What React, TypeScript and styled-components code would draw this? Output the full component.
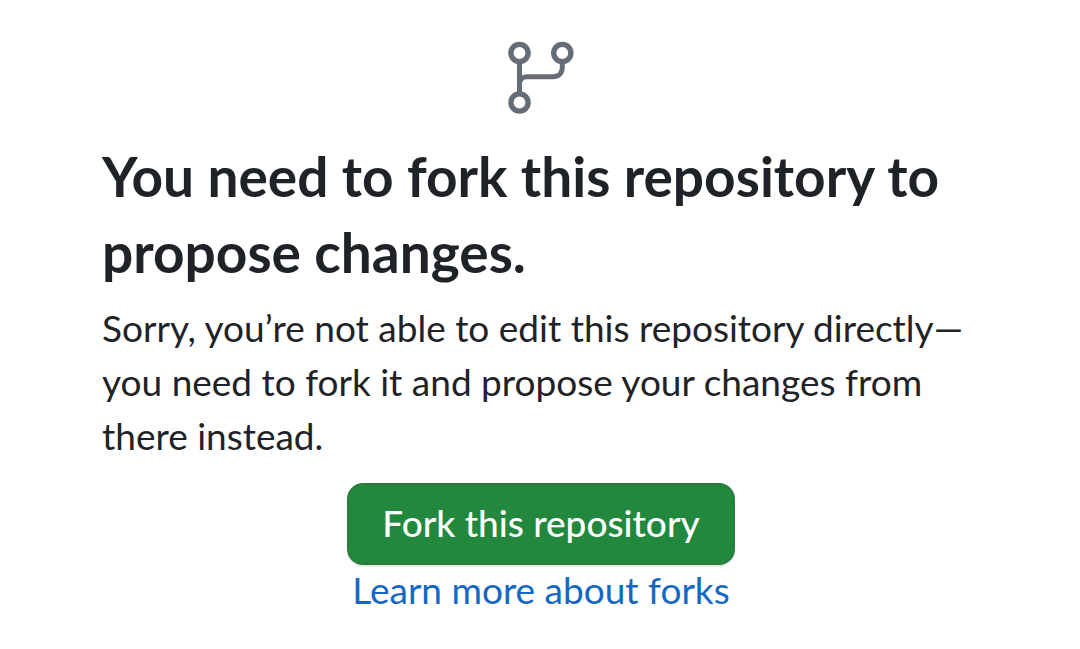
import React from "react";
import styled, { createGlobalStyle } from "styled-components";

const GlobalStyle = createGlobalStyle`
  *, *::before, *::after { box-sizing: border-box; }
  body {
    margin: 0;
    background: #ffffff;
    color: #1f2328;
    font-family: Lato, "Noto Sans", sans-serif;
  }
`;

const Page = styled.main`
  display: flex;
  flex-direction: column;
  align-items: center;
  padding: 40px 100px 40px 102px;
`;

const ForkIcon = styled.svg`
  display: block;
  width: 68px;
  height: 76px;
  fill: none;
  stroke: #656d76;
  stroke-width: 5;
`;

const Title = styled.h1`
  align-self: stretch;
  margin: 22px 0 0;
  font-size: 55px;
  line-height: 76px;
  font-weight: 700;
`;

const Message = styled.p`
  align-self: stretch;
  margin: 11px 0 0;
  font-size: 37px;
  line-height: 54px;
`;

const ForkButton = styled.button`
  margin: 20px 0 0;
  padding: 0 33px 4px;
  height: 82px;
  border: 2px solid #2a7b40;
  border-radius: 16px;
  background: #21883d;
  color: #ffffff;
  font-family: inherit;
  font-size: 37px;
  font-weight: 500;
  box-shadow: 0 2px 0 rgba(31, 35, 40, 0.1);
`;

const LearnLink = styled.a`
  color: #1567c4;
  font-size: 37px;
  line-height: 50px;
  text-decoration: none;
`;

export default function App() {
  return (
    <>
      <GlobalStyle />
      <Page>
        <ForkIcon viewBox="0 0 68 76" aria-hidden="true">
          <circle cx="12.5" cy="13" r="8.6" strokeWidth="5.4" />
          <circle cx="55.3" cy="13" r="8.6" strokeWidth="5.4" />
          <circle cx="12.5" cy="62.5" r="8.6" strokeWidth="5.4" />
          <path d="M12.5 22v32M12.5 44c0-4.500 3-7.300 7.500-7.300h26c5.500 0 9.300-3.800 9.300-9.200V22" />
        </ForkIcon>
        <Title>You need to fork this repository to propose changes.</Title>
        <Message>
          Sorry, you’re not able to edit this repository directly—you need to
          fork it and propose your changes from there instead.
        </Message>
        <ForkButton type="button">Fork this repository</ForkButton>
        <LearnLink href="#forks">Learn more about forks</LearnLink>
      </Page>
    </>
  );
}
